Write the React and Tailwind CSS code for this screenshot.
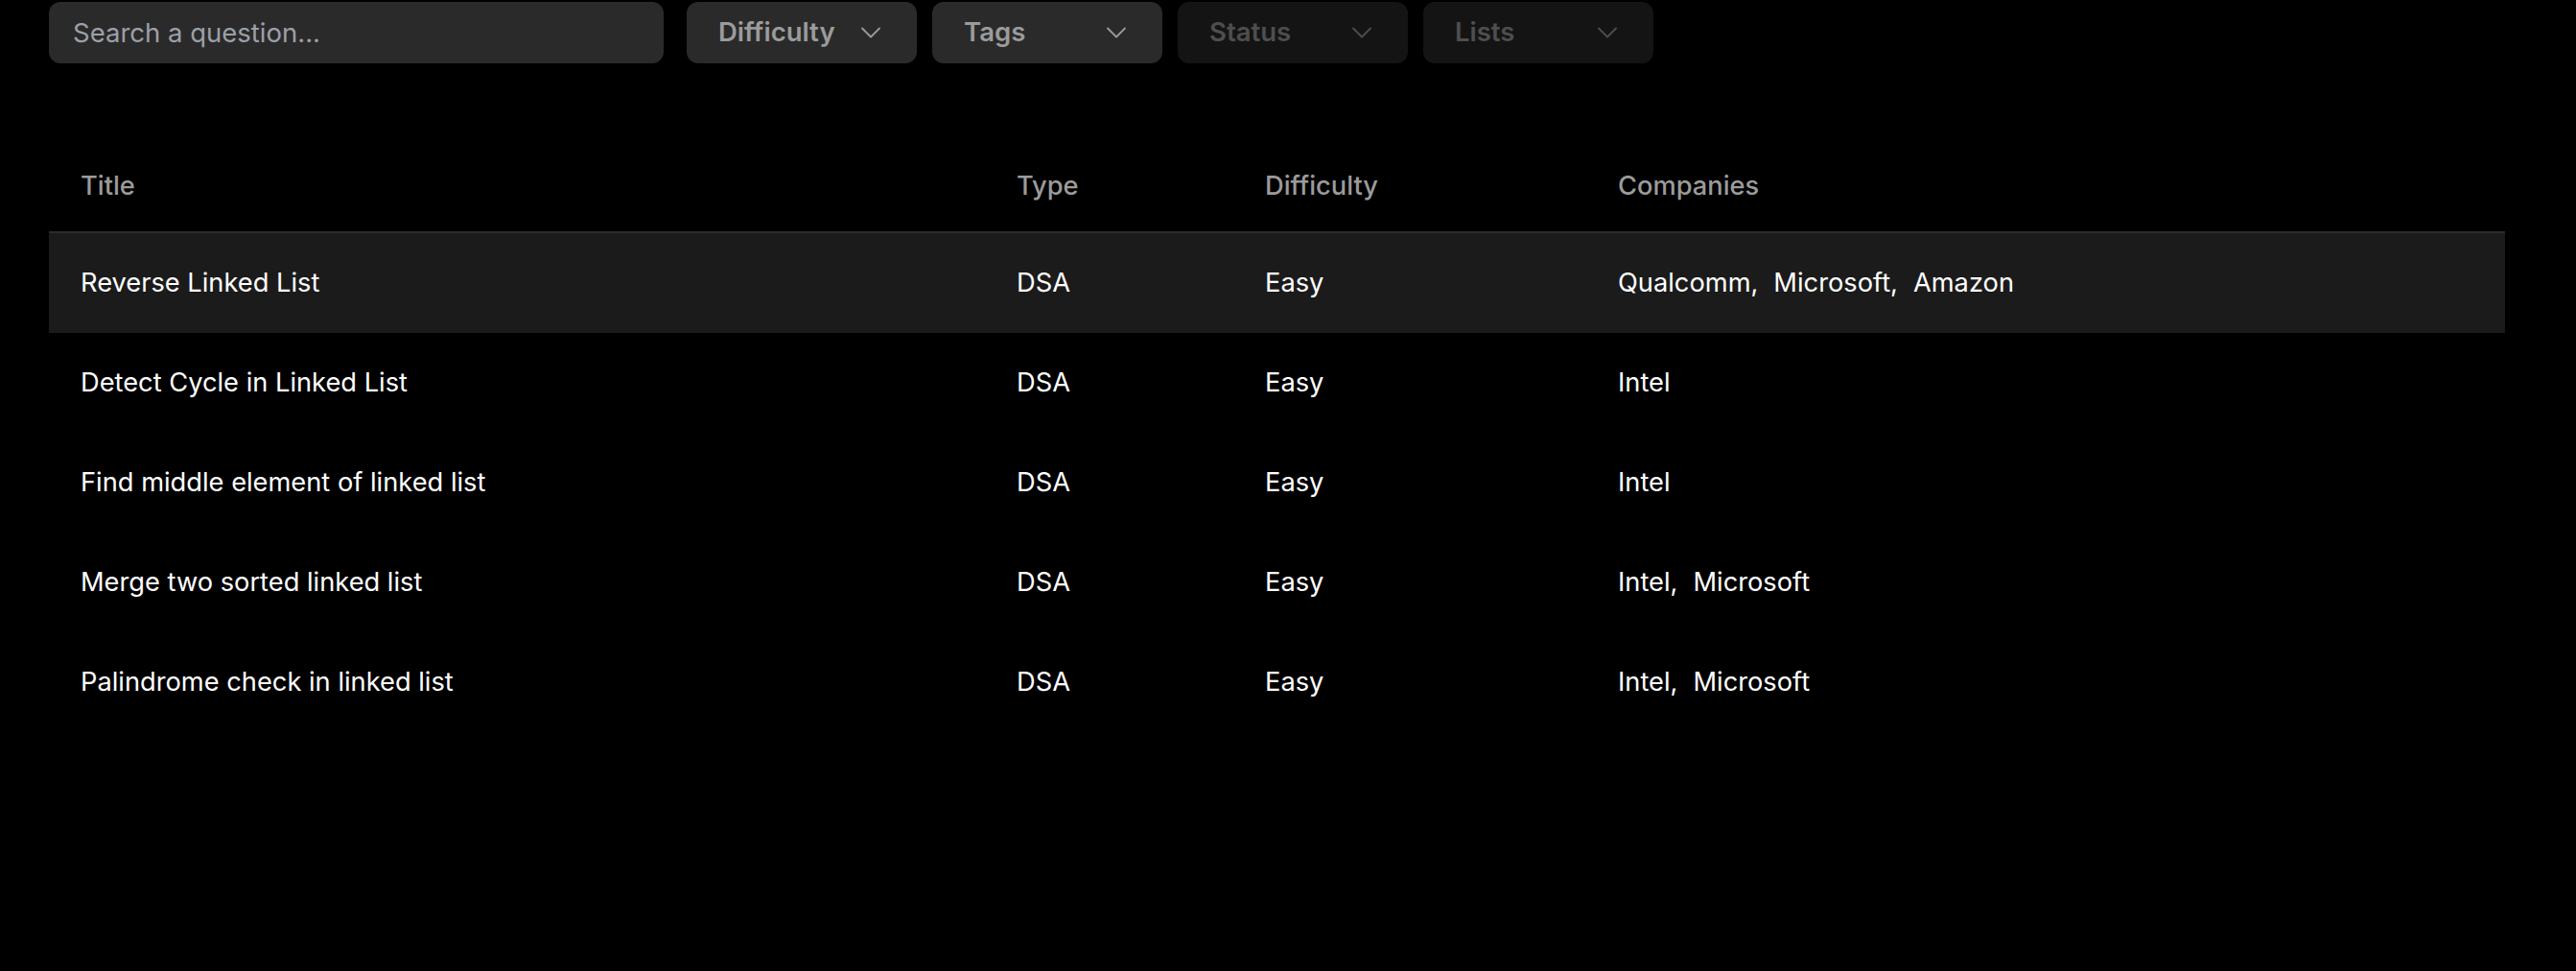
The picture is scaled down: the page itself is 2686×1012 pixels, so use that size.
import { ChevronDown } from "lucide-react";

const questions = [
  { title: "Reverse Linked List", type: "DSA", difficulty: "Easy", companies: ["Qualcomm", "Microsoft", "Amazon"] },
  { title: "Detect Cycle in Linked List", type: "DSA", difficulty: "Easy", companies: ["Intel"] },
  { title: "Find middle element of linked list", type: "DSA", difficulty: "Easy", companies: ["Intel"] },
  { title: "Merge two sorted linked list", type: "DSA", difficulty: "Easy", companies: ["Intel", "Microsoft"] },
  { title: "Palindrome check in linked list", type: "DSA", difficulty: "Easy", companies: ["Intel", "Microsoft"] },
];

function Filter({ label, disabled }) {
  return (
    <button
      className={
        disabled
          ? "w-[240px] h-[64px] rounded-[12px] bg-[#141414] text-[#4e4e4e] flex items-center justify-between pl-[33px] pr-[30px] font-semibold text-[27.5px]"
          : "w-[240px] h-[64px] rounded-[12px] bg-[#2a2a2a] text-[#9b9b9b] flex items-center justify-between pl-[33px] pr-[30px] font-semibold text-[27.5px]"
      }
    >
      <span>{label}</span>
      <ChevronDown size={36} strokeWidth={1.2} />
    </button>
  );
}

function App() {
  return (
    <div className="min-h-screen bg-black text-white font-['Inter',sans-serif] pl-[51px] pt-[2px]">
      <div className="flex items-center">
        <input
          placeholder="Search a question..."
          className="w-[641px] h-[64px] rounded-[12px] bg-[#2a2a2a] px-[25px] text-[27.5px] text-white placeholder:text-[#9ca0a8] outline-none"
        />
        <div className="flex gap-[16px] ml-[24px]">
          <Filter label="Difficulty" />
          <Filter label="Tags" />
          <Filter label="Status" disabled />
          <Filter label="Lists" disabled />
        </div>
      </div>

      <div className="w-[2561px] mt-[71px] text-[27.25px]">
        <div className="flex items-center h-[104px] pt-[10px] text-[#9b9b9b] font-medium">
          <div className="w-[976px] pl-[33px]">Title</div>
          <div className="w-[259px] pl-[33px]">Type</div>
          <div className="w-[368px] pl-[33px]">Difficulty</div>
          <div className="flex-1 pl-[33px]">Companies</div>
        </div>
        {questions.map((q, i) => (
          <div
            key={q.title}
            className={
              i === 0
                ? "flex items-center h-[106px] bg-[#1b1b1b] border-t-2 border-[#2c2c2c]"
                : "flex items-center h-[104px]"
            }
          >
            <div className="w-[976px] pl-[33px]">{q.title}</div>
            <div className="w-[259px] pl-[33px]">{q.type}</div>
            <div className="w-[368px] pl-[33px]">{q.difficulty}</div>
            <div className="flex-1 pl-[33px] flex gap-[16px]">
              {q.companies.map((c, j) => (
                <span key={c}>
                  {c}
                  {j < q.companies.length - 1 ? "," : ""}
                </span>
              ))}
            </div>
          </div>
        ))}
      </div>
    </div>
  );
}

export default App;
